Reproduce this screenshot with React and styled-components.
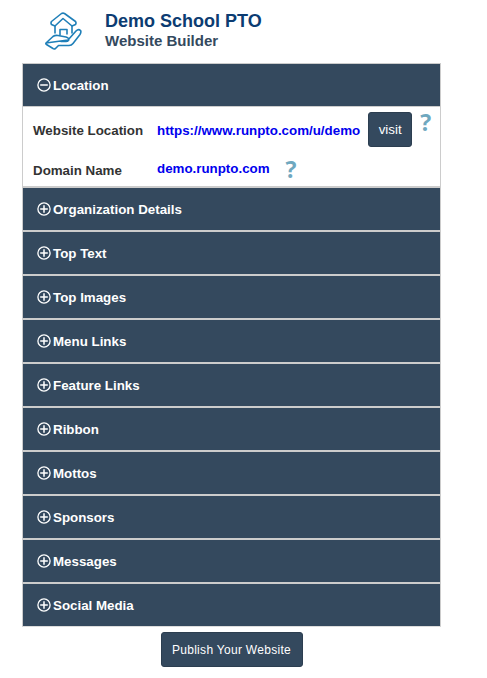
import React from "react";
import styled, { createGlobalStyle } from "styled-components";

const Global = createGlobalStyle`
  html, body { margin: 0; padding: 0; background: #fff; }
  body { font-family: "Liberation Sans", Arial, sans-serif; }
`;
const Page = styled.div`
  width: 487px;
  height: 678px;
  overflow: hidden;
  padding-left: 22px;
  box-sizing: border-box;
`;
const Header = styled.header`
  height: 63px;
  display: flex;
  align-items: flex-start;
`;
const Logo = styled.svg`
  width: 37px;
  height: 39px;
  margin: 12px 0 0 23px;
  flex: none;
`;
const Titles = styled.div`
  margin: 11px 0 0 23px;
`;
const Title = styled.div`
  font-size: 18px;
  line-height: 20px;
  font-weight: 700;
  color: #0c3c72;
`;
const Subtitle = styled.div`
  font-size: 15px;
  line-height: 20px;
  font-weight: 700;
  color: #34495e;
`;
const Accordion = styled.div`
  width: 419px;
  box-sizing: border-box;
  border: 1px solid #ccc;
  border-bottom-color: #ddd;
  background: #ccc;
`;
const SectionHeader = styled.div`
  height: 42px;
  background: #34495e;
  color: #fff;
  font-size: 13.33px;
  font-weight: 700;
  display: flex;
  align-items: center;
  gap: 2px;
  padding-left: 14px;
  & + & {
    margin-top: 2px;
  }
`;
const Body = styled.div`
  height: 79px;
  background: #fff;
  border-top: 1px solid #ccc;
  border-bottom: 2px solid #ccc;
`;
const FirstRow = styled.div`
  display: flex;
  align-items: flex-start;
  height: 47px;
  padding: 5px 0 0 10px;
`;
const SecondRow = styled.div`
  display: flex;
  align-items: flex-start;
  padding: 1px 0 0 10px;
`;
const Label = styled.div`
  width: 124px;
  flex: none;
  font-size: 13.33px;
  font-weight: 700;
  color: #333;
  line-height: 20px;
  margin-top: ${p => p.$top}px;
`;
const Link = styled.a`
  font-size: 13.33px;
  font-weight: 700;
  color: #0000ee;
  line-height: 16px;
  margin-top: ${p => p.$top}px;
`;
const Visit = styled.button`
  width: 44px;
  height: 35px;
  margin-left: 8px;
  padding: 0;
  background: #34495e;
  border: 1px solid #2c3e50;
  border-radius: 3px;
  color: #fff;
  font: 13.33px "Liberation Sans", Arial, sans-serif;
`;
const Help = styled.span`
  font-family: "Open Sans", sans-serif;
  font-size: 23px;
  font-weight: 700;
  line-height: 24px;
  color: #6fa8bf;
  margin-left: ${p => p.$left}px;
  margin-top: ${p => p.$top}px;
`;
const Footer = styled.div`
  width: 419px;
  display: flex;
  justify-content: center;
  margin-top: 5px;
`;
const Publish = styled.button`
  width: 142px;
  height: 35px;
  padding: 0;
  background: #34495e;
  border: 1px solid #2c3e50;
  border-radius: 3px;
  color: #fff;
  font: 12px "Liberation Sans", Arial, sans-serif;
  letter-spacing: 0.3px;
`;

const Toggle = ({ open }) => (
  <svg width="14" height="14" viewBox="0 0 14 14" fill="none" stroke="#fff" strokeWidth="1.3">
    <circle cx="7" cy="7" r="6.1" />
    <path d={open ? "M3.2 7h7.6" : "M3.2 7h7.6M7 3.2v7.6"} strokeWidth="1.5" />
  </svg>
);

const sections = ["Organization Details", "Top Text", "Top Images", "Menu Links", "Feature Links", "Ribbon", "Mottos", "Sponsors", "Messages", "Social Media"];

export default function App() {
  return (
    <Page>
      <Global />
      <Header>
        <Logo viewBox="45 12 37 39" fill="none" stroke="#1f7fb8" strokeWidth="1.6" strokeLinejoin="round" strokeLinecap="round">
          <path d="M55 26 L51.5 24.5 Q50.5 23 51.5 21.5 L61.5 13.5 Q63 12.8 64.5 13.5 L75.5 21.5 Q76.5 23 75.5 24.5 L72 26" />
          <path d="M55 26 V33 M72 26 V33 M55 26 L63 18.5 L72 26" />
          <path d="M60 35 V29.5 H67 V34" />
          <path d="M46 43 L53 36.5 Q55 35 58 35.5 L66 37 Q69.5 38 68.5 40.5 Q67.5 41.5 66 41.5 L61 41.5 M68 40 L76 31 Q78.5 28.5 80.5 30.5 Q81.5 32 80 34.5 L73 43.5 Q71.5 45.5 69 45.5 L58.5 45.5 L55.5 48.5 Q54 49.5 53 48.5 L46.5 44.5 Q45.5 44 46 43 Z" />
        </Logo>
        <Titles>
          <Title>Demo School PTO</Title>
          <Subtitle>Website Builder</Subtitle>
        </Titles>
      </Header>
      <Accordion>
        <SectionHeader><Toggle open />Location</SectionHeader>
        <Body>
          <FirstRow>
            <Label $top={9}>Website Location</Label>
            <Link $top={11}>https://www.runpto.com/u/demo</Link>
            <Visit>visit</Visit>
            <Help $left={8} $top={-2}>?</Help>
          </FirstRow>
          <SecondRow>
            <Label $top={1}>Domain Name</Label>
            <Link $top={1}>demo.runpto.com</Link>
            <Help $left={16} $top={-3}>?</Help>
          </SecondRow>
        </Body>
        {sections.map(s => (
          <SectionHeader key={s}><Toggle />{s}</SectionHeader>
        ))}
      </Accordion>
      <Footer><Publish>Publish Your Website</Publish></Footer>
    </Page>
  );
}
